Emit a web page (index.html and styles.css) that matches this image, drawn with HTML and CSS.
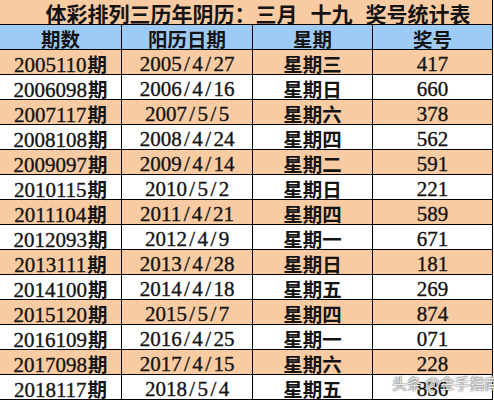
FILE: index.html
```html
<!DOCTYPE html>
<html lang="zh-CN">
<head>
<meta charset="utf-8">
<title>体彩排列三历年阴历三月十九奖号统计表</title>
<link rel="stylesheet" href="styles.css">
</head>
<body>
<div class="page">
  <div class="grid">
    <div class="title"><span class="tt">体彩排列三历年阴历：三月<span class="gap"></span>十九<span class="gap"></span>奖号统计表</span></div>
    <div class="cell head"><span class="cj">期数</span></div>
    <div class="cell head"><span class="cj">阳历日期</span></div>
    <div class="cell head"><span class="cj">星期</span></div>
    <div class="cell head"><span class="cj">奖号</span></div>

    <div class="cell odd">2005110<span class="cj q">期</span></div><div class="cell odd">2005<span class="sl">/</span>4<span class="sl">/</span>27</div><div class="cell odd"><span class="cj">星期三</span></div><div class="cell odd">417</div>
    <div class="cell">2006098<span class="cj q">期</span></div><div class="cell">2006<span class="sl">/</span>4<span class="sl">/</span>16</div><div class="cell"><span class="cj">星期日</span></div><div class="cell">660</div>
    <div class="cell odd">2007117<span class="cj q">期</span></div><div class="cell odd">2007<span class="sl">/</span>5<span class="sl">/</span>5</div><div class="cell odd"><span class="cj">星期六</span></div><div class="cell odd">378</div>
    <div class="cell">2008108<span class="cj q">期</span></div><div class="cell">2008<span class="sl">/</span>4<span class="sl">/</span>24</div><div class="cell"><span class="cj">星期四</span></div><div class="cell">562</div>
    <div class="cell odd">2009097<span class="cj q">期</span></div><div class="cell odd">2009<span class="sl">/</span>4<span class="sl">/</span>14</div><div class="cell odd"><span class="cj">星期二</span></div><div class="cell odd">591</div>
    <div class="cell">2010115<span class="cj q">期</span></div><div class="cell">2010<span class="sl">/</span>5<span class="sl">/</span>2</div><div class="cell"><span class="cj">星期日</span></div><div class="cell">221</div>
    <div class="cell odd">2011104<span class="cj q">期</span></div><div class="cell odd">2011<span class="sl">/</span>4<span class="sl">/</span>21</div><div class="cell odd"><span class="cj">星期四</span></div><div class="cell odd">589</div>
    <div class="cell">2012093<span class="cj q">期</span></div><div class="cell">2012<span class="sl">/</span>4<span class="sl">/</span>9</div><div class="cell"><span class="cj">星期一</span></div><div class="cell">671</div>
    <div class="cell odd">2013111<span class="cj q">期</span></div><div class="cell odd">2013<span class="sl">/</span>4<span class="sl">/</span>28</div><div class="cell odd"><span class="cj">星期日</span></div><div class="cell odd">181</div>
    <div class="cell">2014100<span class="cj q">期</span></div><div class="cell">2014<span class="sl">/</span>4<span class="sl">/</span>18</div><div class="cell"><span class="cj">星期五</span></div><div class="cell">269</div>
    <div class="cell odd">2015120<span class="cj q">期</span></div><div class="cell odd">2015<span class="sl">/</span>5<span class="sl">/</span>7</div><div class="cell odd"><span class="cj">星期四</span></div><div class="cell odd">874</div>
    <div class="cell">2016109<span class="cj q">期</span></div><div class="cell">2016<span class="sl">/</span>4<span class="sl">/</span>25</div><div class="cell"><span class="cj">星期一</span></div><div class="cell">071</div>
    <div class="cell odd">2017098<span class="cj q">期</span></div><div class="cell odd">2017<span class="sl">/</span>4<span class="sl">/</span>15</div><div class="cell odd"><span class="cj">星期六</span></div><div class="cell odd">228</div>
    <div class="cell">2018117<span class="cj q">期</span></div><div class="cell">2018<span class="sl">/</span>5<span class="sl">/</span>4</div><div class="cell"><span class="cj">星期五</span></div><div class="cell">836</div>
  </div>
  <div class="watermark">头条 @金手指南</div>
</div>
</body>
</html>
```

FILE: styles.css
```css
html, body {
  margin: 0;
  padding: 0;
  background: #ffffff;
}

.page {
  position: relative;
  width: 494px;
  height: 401px;
  overflow: hidden;
}

.grid {
  display: grid;
  grid-template-columns: 121px 130px 119px 119px;
  grid-auto-rows: 24px;
  gap: 1px;
  width: 493px;
  padding: 0 1px 1px 0;
  box-sizing: border-box;
  background: #000;
  font-family: "Liberation Serif", "Noto Sans CJK SC", serif;
  font-weight: 400;
  font-size: 21px;
  color: #141414;
}

.cell {
  background: #ffffff;
  text-align: center;
  line-height: 20px;
  padding-top: 4px;
  box-sizing: border-box;
  white-space: nowrap;
  -webkit-text-stroke: 0.35px #141414;
}

.cj {
  display: inline-block;
  line-height: 20px;
  font-family: "Noto Sans CJK SC", sans-serif;
  font-size: 19.5px;
  font-weight: 700;
  -webkit-text-stroke: 0;
}

.q {
  margin-left: 1px;
}

.sl {
  display: inline-block;
  padding: 0 2.4px;
}

.title {
  grid-column: 1 / -1;
  background: #f9cba2;
  display: flex;
  justify-content: center;
  align-items: center;
  padding: 2px 0 0 24px;
  box-sizing: border-box;
  white-space: nowrap;
}

.tt {
  display: inline-block;
  line-height: 21px;
  font-family: "Noto Sans CJK SC", sans-serif;
  font-size: 21px;
  font-weight: 700;
}

.gap {
  display: inline-block;
  width: 13px;
}

.head {
  background: #9dcbf6;
}

.odd {
  background: #f9cba2;
}

.watermark {
  position: absolute;
  left: 392px;
  top: 374px;
  font-family: "Noto Sans CJK SC", sans-serif;
  font-size: 15px;
  line-height: 18px;
  color: rgba(250, 250, 250, 0.92);
  text-shadow: 0 0 1px #444, 0 0 2px rgba(0, 0, 0, 0.6);
  white-space: nowrap;
}
```
